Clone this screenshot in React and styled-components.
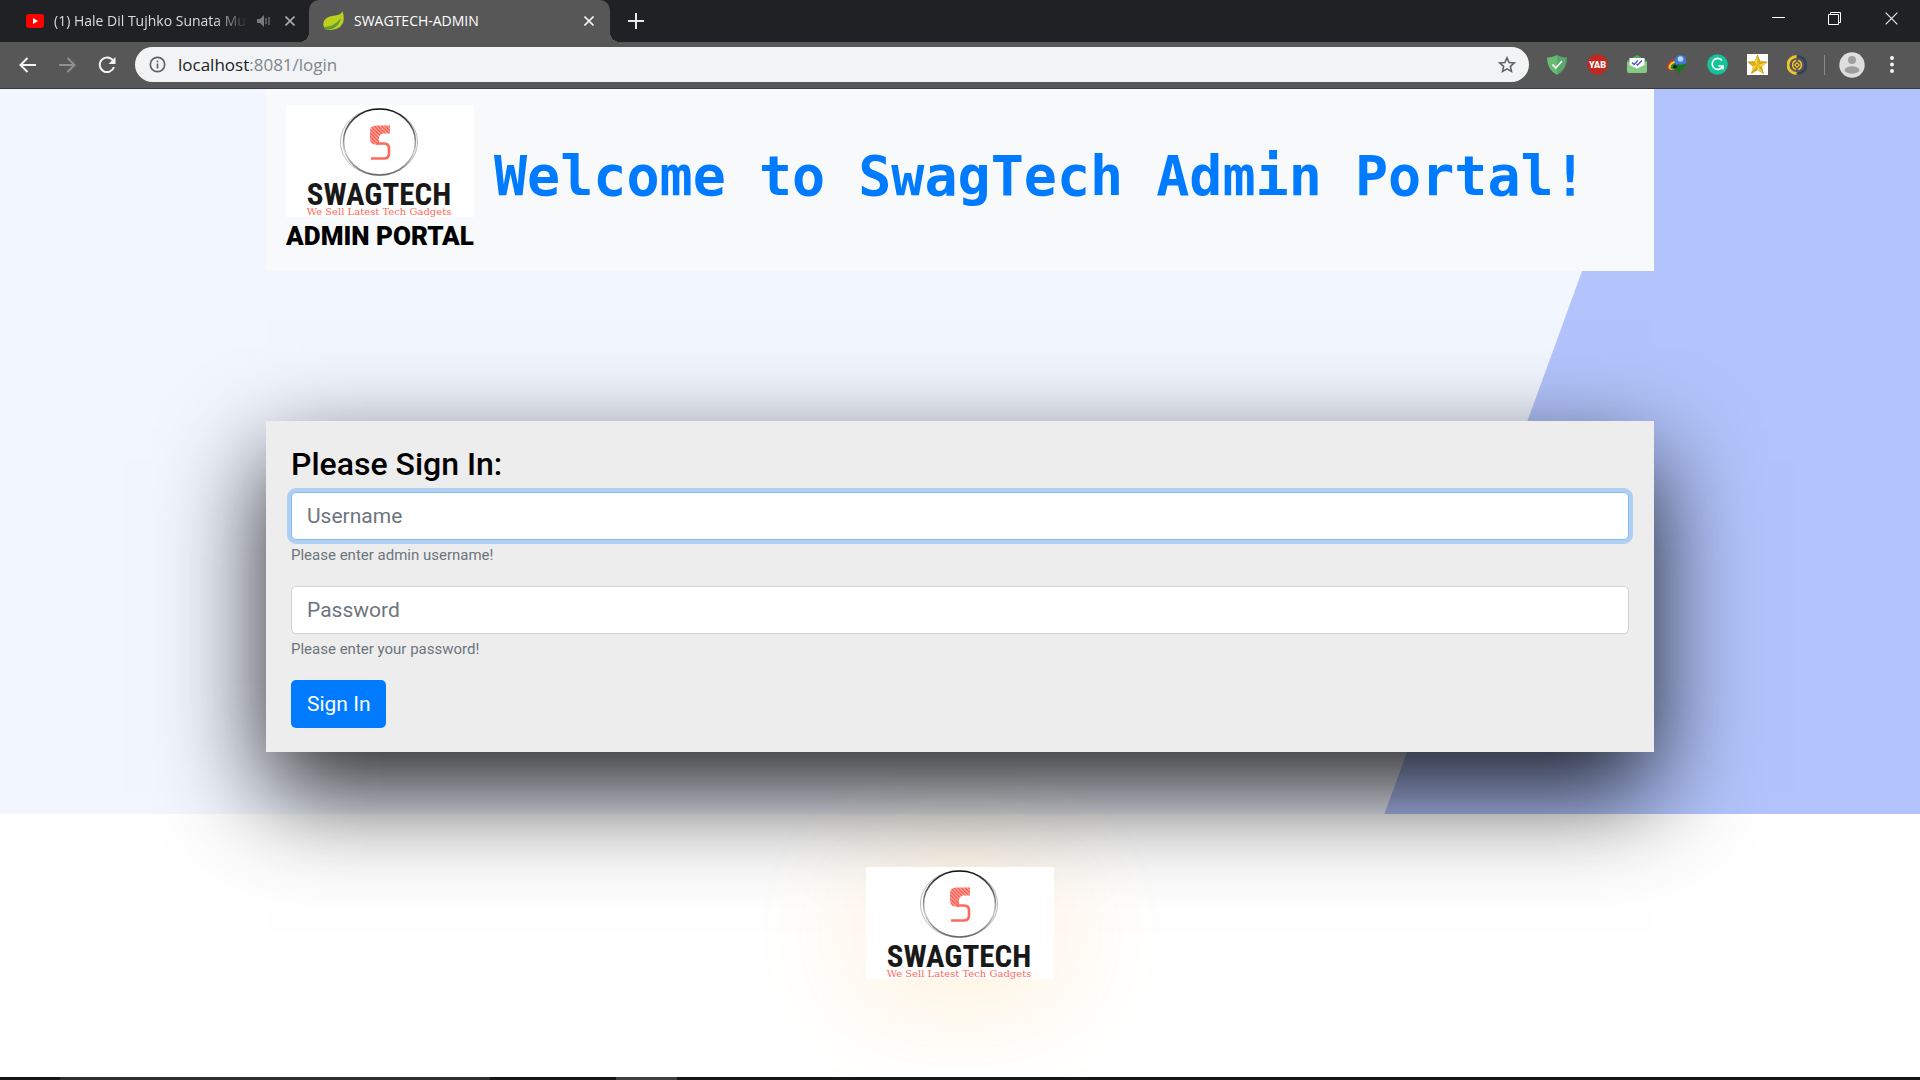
import React from "react";
import styled, { createGlobalStyle } from "styled-components";

const ui = '"Open Sans", "Noto Sans", sans-serif';
const body = 'Roboto, "Liberation Sans", sans-serif';

const GlobalStyle = createGlobalStyle`
  *, *::before, *::after { box-sizing: border-box; }
  body { margin: 0; background: #fff; font-family: ${body}; font-size: 20px; color: #000; }
  h1, h2, p { margin: 0; }
  button { font: inherit; border: 0; padding: 0; background: none; color: inherit; }
  svg { display: block; }
`;

const Window = styled.div`
  min-height: 100vh;
  display: flex;
  flex-direction: column;
  overflow: hidden;
`;

/* Browser chrome */
const TabStrip = styled.header`
  display: flex;
  align-items: stretch;
  height: 42px;
  background: #202124;
  color: #e8eaed;
  font-family: ${ui};
  font-size: 14px;
`;
const Tab = styled.div`
  position: relative;
  display: flex;
  align-items: center;
  gap: 10px;
  width: ${(p) => (p.$active ? 301 : 309)}px;
  padding: 0 ${(p) => (p.$active ? 11 : 9)}px 0 ${(p) => (p.$active ? 14 : 26)}px;
  border-radius: 10px 10px 0 0;
  background: ${(p) => (p.$active ? "#575757" : "transparent")};
  color: ${(p) => (p.$active ? "#fff" : "#dadce0")};
  &::before, &::after {
    content: "";
    display: ${(p) => (p.$active ? "block" : "none")};
    position: absolute;
    bottom: 0;
    width: 10px;
    height: 10px;
  }
  &::before { right: 100%; background: radial-gradient(circle at 0 0, transparent 10px, #575757 10px); }
  &::after { left: 100%; background: radial-gradient(circle at 100% 0, transparent 10px, #575757 10px); }
`;
const TabTitle = styled.span`
  flex: 1;
  padding-bottom: 2px;
  overflow: hidden;
  white-space: nowrap;
  ${(p) => p.$fade && "mask-image: linear-gradient(90deg, #000 160px, transparent 194px);"}
`;
const IconButton = styled.button`
  flex: none;
  display: grid;
  place-items: center;
  width: ${(p) => p.$w || 20}px;
  height: ${(p) => p.$h || 20}px;
  color: ${(p) => p.$c || "inherit"};
`;
const NewTab = styled(IconButton)`
  align-self: center;
  margin-left: 16px;
`;
const WindowButtons = styled.div`
  display: flex;
  height: 37px;
  margin-left: auto;
`;
const Toolbar = styled.nav`
  display: flex;
  align-items: center;
  height: 47px;
  padding: 0 8px 1px 7px;
  background: #575757;
  border-bottom: 1px solid #3c3c3c;
  color: #f1f3f4;
`;
const Address = styled.div`
  flex: 1;
  display: flex;
  align-items: center;
  gap: 12px;
  height: 35px;
  margin-left: 8px;
  padding: 0 12px 0 14px;
  border-radius: 18px;
  background: #f1f3f4;
  color: #5f6368;
  font-family: ${ui};
  font-size: 17px;
`;
const Url = styled.span`
  flex: 1;
  color: #80868b;
  b { font-weight: 400; color: #202124; }
`;
const Extensions = styled.div`
  display: flex;
  align-items: center;
  margin-left: 8px;
`;
const Divider = styled.span`
  width: 1px;
  height: 20px;
  margin: 0 7px;
  background: #8a8a8a;
`;

/* Page */
const Page = styled.main`
  flex: 1;
  display: flex;
  flex-direction: column;
`;
const Hero = styled.section`
  padding: 0 266px 62px;
  background: linear-gradient(110deg, #f1f6ff 75.45%, #b2c4fb 75.5%);
`;
const Banner = styled.div`
  display: flex;
  align-items: center;
  gap: 20px;
  height: 182px;
  padding: 0 20px;
  background: #f8f9fa;
`;
const Brand = styled.a`
  display: block;
  color: #000;
  text-decoration: none;
  text-align: center;
  font-size: 26px;
  line-height: 38px;
  font-weight: 900;
  white-space: nowrap;
`;
const Welcome = styled.h1`
  padding-bottom: 8px;
  color: #007bff;
  font: 700 55px/66px "DejaVu Sans Mono", monospace;
  white-space: nowrap;
`;
const Card = styled.form`
  margin-top: 150px;
  padding: 25px 25px 24px;
  background: #ededed;
  position: relative;
  box-shadow: 0 40px 95px rgba(0, 0, 0, 0.85);
`;
const Title = styled.h2`
  margin-bottom: 10px;
  font-size: 32px;
  line-height: 36px;
  font-weight: 500;
`;
const Field = styled.div`
  margin-bottom: 20px;
`;
const Input = styled.input`
  display: block;
  width: 100%;
  height: 48px;
  padding: 0 15px;
  border: 1px solid ${(p) => (p.$active ? "#80bdff" : "#ced4da")};
  border-radius: 5px;
  outline: 0;
  background: #fff;
  box-shadow: ${(p) => (p.$active ? "0 0 0 4px rgba(0, 123, 255, 0.25)" : "none")};
  font: 400 21px/30px ${body};
  &::placeholder { color: #6c757d; opacity: 1; }
`;
const Hint = styled.label`
  display: block;
  margin-top: 5px;
  color: #6c757d;
  font-size: 15px;
  line-height: 21px;
`;
const Submit = styled.button`
  height: 48px;
  padding: 0 16px;
  border-radius: 5px;
  background: #007bff;
  color: #fff;
  font-size: 21px;
  line-height: 30px;
`;
const Footer = styled.footer`
  flex: 1;
  display: flex;
  justify-content: center;
  align-items: flex-start;
  padding-top: 53px;
`;
const LogoGlow = styled.div`
  position: relative;
  box-shadow: 0 12px 115px rgba(255, 165, 0, 0.2);
`;
const LogoSvg = styled.svg`
  width: 188px;
  height: 112px;
  background: #fff;
`;
const Taskbar = styled.div`
  position: relative;
  display: flex;
  height: 3px;
  background: #161616;
`;
const TaskbarItem = styled.span`
  width: ${(p) => p.$w}px;
  margin-left: ${(p) => p.$ml}px;
  background: ${(p) => p.$c};
`;

const Close = ({ size = 10, w = 1.6 }) => (
  <svg width={size} height={size} viewBox="0 0 10 10" stroke="currentColor" strokeWidth={w} aria-hidden="true">
    <path d="M.5.5l9 9M9.5.5l-9 9" />
  </svg>
);

function Logo({ id }) {
  return (
    <LogoSvg viewBox="0 0 188 112" role="img" aria-label="SwagTech">
      <defs>
        <pattern id={`${id}-hatch`} width="2.6" height="2.6" patternUnits="userSpaceOnUse" patternTransform="rotate(-45)">
          <rect width="2.6" height="2.6" fill="#ffb3ab" />
          <rect width="1.5" height="2.6" fill="#fb5a4c" />
        </pattern>
        <linearGradient id={`${id}-ring`} x1="0" y1="0" x2="0" y2="1">
          <stop offset="0" stopColor="#111" />
          <stop offset=".45" stopColor="#888" />
          <stop offset=".65" stopColor="#ccc" />
          <stop offset="1" stopColor="#666" />
        </linearGradient>
      </defs>
      <ellipse cx="93" cy="37" rx="38.6" ry="33.3" fill="none" stroke="#bbb" strokeWidth="1" />
      <ellipse cx="93.5" cy="37" rx="36" ry="33" fill="none" stroke={`url(#${id}-ring)`} strokeWidth="1.6" />
      <path d="M104 20.500H90q-6 0-6 6v7q0 6 6 6h3v-6q0-4 4-5h7z" fill={`url(#${id}-hatch)`} />
      <path d="M90 38.500h8q5 0 5 5v5q0 5-5 5H85" fill="none" stroke="#fb6a5c" strokeWidth="2.600" />
      <text x="93" y="100" textAnchor="middle" fontFamily='"Liberation Sans Narrow", "Roboto Condensed", Roboto, sans-serif' fontSize="31" fontWeight="700" fill="#191919">SWAGTECH</text>
      <text x="93" y="110" textAnchor="middle" fontFamily='"DejaVu Serif", serif' fontSize="10" fontWeight="400" fill="#ff6a5a">We Sell Latest Tech Gadgets</text>
    </LogoSvg>
  );
}

export default function App() {
  return (
    <Window>
      <GlobalStyle />
      <TabStrip>
        <Tab>
          <svg width="18" height="14" viewBox="0 0 18 14" aria-hidden="true"><rect width="18" height="14" rx="3" fill="#f00" /><path d="M7 4l5 3-5 3z" fill="#fff" /></svg>
          <TabTitle $fade>(1) Hale Dil Tujhko Sunata Mu</TabTitle>
          <svg width="13" height="12" viewBox="0 0 13 12" fill="#777a7e" aria-hidden="true"><path d="M0 4h3l4-4v12L3 8H0z" /><path d="M9 3v6M12 2v8" stroke="#777a7e" strokeWidth="1.200" /></svg>
          <IconButton aria-label="Close tab" $c="#aaadb1"><Close /></IconButton>
        </Tab>
        <Tab $active>
          <svg width="21" height="20" viewBox="0 0 21 20" aria-hidden="true"><path d="M19.500 0q4 13-5 17.500Q8 20 2 18-2 12 3 7.500 6 5 12 4.500q6-.5 7.500-4.500z" fill="#bccf1f" /><path d="M1 16q10 0 17-9-2 9-10 11-4 1.500-6 0z" fill="#5f9a32" /></svg>
          <TabTitle>SWAGTECH-ADMIN</TabTitle>
          <IconButton aria-label="Close tab" $c="#f1f3f4"><Close /></IconButton>
        </Tab>
        <NewTab aria-label="New tab"><svg width="16" height="16" viewBox="0 0 16 16" stroke="#e8eaed" strokeWidth="2"><path d="M8 0v16M0 8h16" /></svg></NewTab>
        <WindowButtons>
          <IconButton $w={56} $h={37} aria-label="Minimise"><svg width="13" height="13" viewBox="0 0 13 13"><path d="M0 5h13v1H0z" fill="#fff" /></svg></IconButton>
          <IconButton $w={57} $h={37} aria-label="Restore"><svg width="13" height="13" viewBox="0 0 13 13" fill="none" stroke="#fff"><path d="M.5 2.500h10v10H.5zM2.500 2.500v-2h10v10h-2" /></svg></IconButton>
          <IconButton $w={57} $h={37} aria-label="Close window"><Close size={13} w={0.9} /></IconButton>
        </WindowButtons>
      </TabStrip>
      <Toolbar>
        <IconButton $w={40} $h={36} aria-label="Back"><svg width="17" height="16" viewBox="0 0 17 16" fill="none" stroke="#f1f3f4" strokeWidth="2"><path d="M17 8H2M8.500 1l-7 7 7 7" /></svg></IconButton>
        <IconButton $w={40} $h={36} aria-label="Forward"><svg width="17" height="16" viewBox="0 0 17 16" fill="none" stroke="#909090" strokeWidth="2"><path d="M0 8h15M8.500 1l7 7-7 7" /></svg></IconButton>
        <IconButton $w={40} $h={36} aria-label="Reload"><svg width="18" height="18" viewBox="0 0 18 18" fill="none"><path d="M15 4.500A7.300 7.300 0 1 0 16 11" stroke="#f1f3f4" strokeWidth="2" /><path d="M17.500 1v7h-7z" fill="#f1f3f4" /></svg></IconButton>
        <Address>
          <svg width="17" height="17" viewBox="0 0 17 17" fill="none" stroke="#5f6368" strokeWidth="1.700" aria-hidden="true"><circle cx="8.500" cy="8.500" r="7.200" /><path d="M8.500 7.500v5M8.500 4.500v1.700" /></svg>
          <Url><b>localhost</b>:8081/login</Url>
          <IconButton aria-label="Bookmark"><svg width="18" height="17" viewBox="0 0 18 17" fill="none" stroke="#5f6368" strokeWidth="1.600"><path d="M9 1.800l2.100 4.700 5.100.5-3.800 3.400 1.100 5L9 12.800l-4.500 2.600 1.100-5L1.800 7l5.100-.5z" /></svg></IconButton>
        </Address>
        <Extensions>
          <IconButton $w={40} $h={36} aria-label="AdGuard"><svg width="20" height="20" viewBox="0 0 20 20"><path d="M10 0q5 2.500 10 2.500 0 12-10 17.500z" fill="#5ba66a" /><path d="M10 0Q5 2.500 0 2.500 0 14.500 10 20z" fill="#68bc71" /><path d="M5.500 9.500l3.300 3.500L15 6" fill="none" stroke="#fff" strokeWidth="1.700" /></svg></IconButton>
          <IconButton $w={40} $h={36} aria-label="YAB"><svg width="21" height="21" viewBox="0 0 21 21"><circle cx="10.500" cy="10.500" r="10.300" fill="#c4271d" /><text x="10.500" y="13.500" textAnchor="middle" fontFamily="Roboto, sans-serif" fontSize="9" fontWeight="900" fill="#fff">YAB</text></svg></IconButton>
          <IconButton $w={40} $h={36} aria-label="Mail tracker"><svg width="20" height="20" viewBox="0 0 20 20"><path d="M0 6l10-6 10 6v3H0z" fill="#4fae57" /><path d="M0 7h20v9q0 2-2 2H2q-2 0-2-2z" fill="#85cb87" /><path d="M2.500 3h15v7L10 13.500 2.500 10z" fill="#fff" /><path d="M5 7.500l2 2 4-4M9.500 9l1 1 4.500-4.500" fill="none" stroke="#4b4fd0" strokeWidth="1.300" /></svg></IconButton>
          <IconButton $w={40} $h={36} aria-label="Download manager"><svg width="20" height="19" viewBox="0 0 20 19"><path d="M0 12Q1 4 10 4l1 10q-5 3-9 1-2-1-2-3z" fill="#d8352a" /><path d="M1.500 12Q3 5.500 10 6v8q-5 2-7.500 0z" fill="#f3d323" /><path d="M3.500 12q1-4.500 7-4.500v6q-4 2-6.500.5z" fill="#2d8a3c" /><path d="M5.500 12q1-3 5-3v4q-3 1.500-5-1z" fill="#222" /><circle cx="13.500" cy="6" r="6" fill="#3f79d0" /><circle cx="13.500" cy="4" r="2.800" fill="#b5d4fa" /><path d="M10 9q5 2 10-1l-1.500 3-7 8-1-4-5 .5 5-3.500z" fill="#187a16" /></svg></IconButton>
          <IconButton $w={40} $h={36} aria-label="Grammarly"><svg width="21" height="21" viewBox="0 0 21 21" fill="none"><circle cx="10.500" cy="10.500" r="10.300" fill="#15c39a" /><path d="M15 6.500a5.500 5.500 0 1 0 .8 5.500h-4.500M16 11.500v4" stroke="#fff" strokeWidth="1.700" /></svg></IconButton>
          <IconButton $w={40} $h={36} aria-label="Star"><svg width="21" height="21" viewBox="0 0 21 21"><path d="M0 0h21v21H0z" fill="#fff" /><path d="M10.500 1l2.600 6.600 7 .4-5.500 4.600 1.900 7-6-3.900-6 3.900 1.900-7L.9 8l7-.4z" fill="#dcae10" stroke="#b58c06" strokeWidth=".6" /><path d="M10.500 2v9l-3-3zM10.500 11l9-2.500-5 4zM10.500 11l5.500 8-5.500-3.500zM10.500 11l-6 7 1.500-6z" fill="#f3d24a" /></svg></IconButton>
          <IconButton $w={40} $h={36} aria-label="Coin"><svg width="20" height="20" viewBox="0 0 20 20" fill="none"><path d="M10.500 1.500a8.500 8.500 0 0 1 0 17" stroke="#33435a" strokeWidth="3" /><path d="M9.500 1.500a8.500 8.500 0 0 0 0 17" stroke="#f4c22b" strokeWidth="3" /><path d="M9 5.500a4.700 4.700 0 0 0 0 9" stroke="#f4c22b" strokeWidth="1.400" /><path d="M11 5.500a4.700 4.700 0 0 1 0 9" stroke="#f4c22b" strokeWidth="1.600" /><path d="M10 7l3 3-3 3-3-3z" fill="#f4c22b" /><circle cx="10" cy="10" r="1" fill="#33435a" /></svg></IconButton>
          <Divider />
          <IconButton $w={40} $h={36} aria-label="Profile"><svg width="26" height="26" viewBox="0 0 26 26"><circle cx="13" cy="13" r="12.700" fill="#dedede" /><circle cx="13" cy="8" r="4" fill="#9e9e9e" /><ellipse cx="13" cy="18" rx="7.500" ry="3.700" fill="#9e9e9e" /></svg></IconButton>
          <IconButton $w={40} $h={36} aria-label="Menu"><svg width="4" height="17" viewBox="0 0 4 17" fill="#f1f3f4"><circle cx="2" cy="2" r="2" /><circle cx="2" cy="8.500" r="2" /><circle cx="2" cy="15" r="2" /></svg></IconButton>
        </Extensions>
      </Toolbar>
      <Page>
        <Hero>
          <Banner>
            <Brand href="#"><Logo id="top" />ADMIN PORTAL</Brand>
            <Welcome>Welcome to SwagTech Admin Portal!</Welcome>
          </Banner>
          <Card>
            <Title>Please Sign In:</Title>
            <Field>
              <Input id="username" placeholder="Username" $active />
              <Hint htmlFor="username">Please enter admin username!</Hint>
            </Field>
            <Field>
              <Input id="password" type="password" placeholder="Password" />
              <Hint htmlFor="password">Please enter your password!</Hint>
            </Field>
            <Submit type="submit">Sign In</Submit>
          </Card>
        </Hero>
        <Footer><LogoGlow><Logo id="bottom" /></LogoGlow></Footer>
      </Page>
      <Taskbar>
        <TaskbarItem $ml={60} $w={430} $c="#2e2d2f" />
        <TaskbarItem $ml={126} $w={61} $c="#3f3f41" />
      </Taskbar>
    </Window>
  );
}
